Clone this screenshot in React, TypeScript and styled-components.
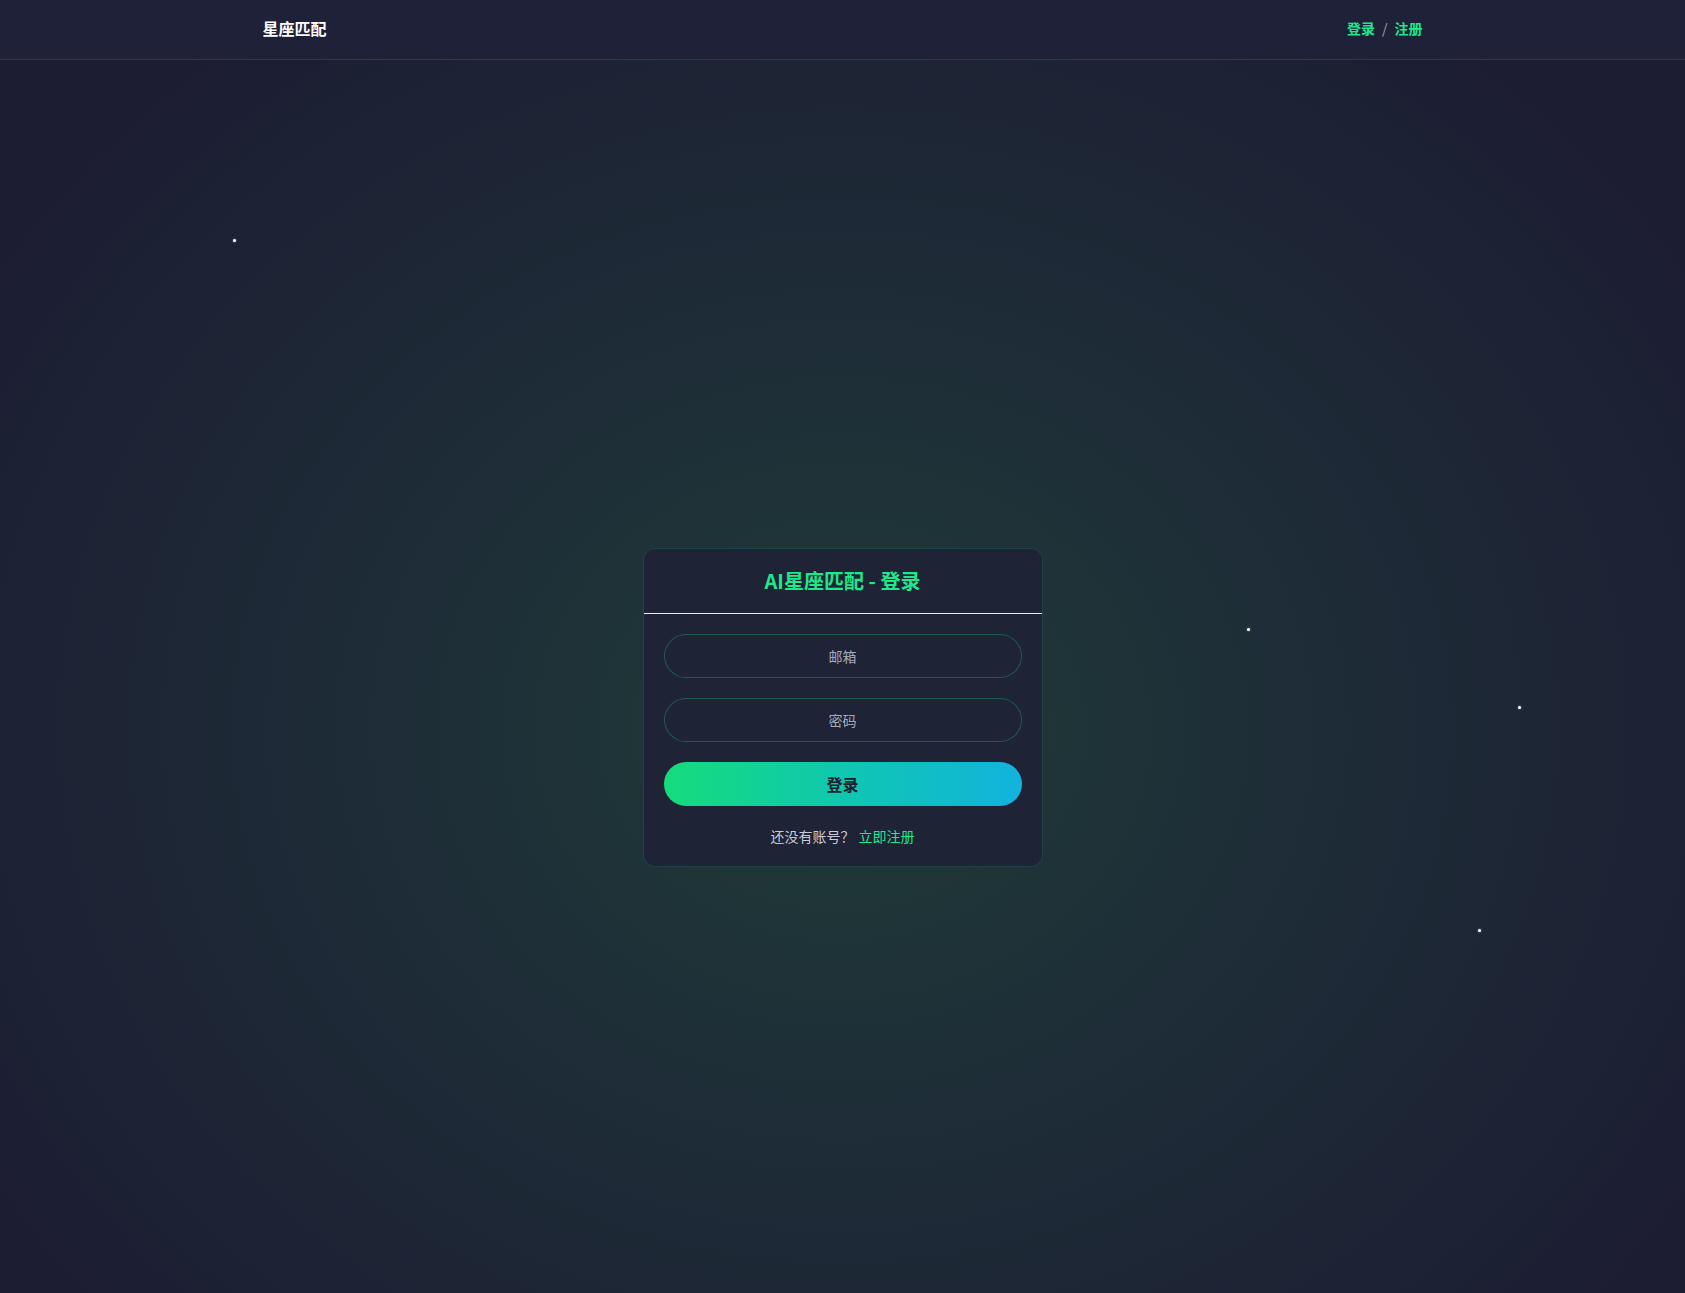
import React from "react";
import styled, { createGlobalStyle } from "styled-components";

const GlobalStyle = createGlobalStyle`
  html, body {
    margin: 0;
    padding: 0;
    overflow: hidden;
  }
  body {
    font-family: "Noto Sans CJK SC", "Noto Sans", sans-serif;
    background: #1c1d33;
    color: #e6e8ef;
  }
  * { box-sizing: border-box; }
`;

const Page = styled.div`
  position: relative;
  min-height: 100vh;
  background: radial-gradient(ellipse 60% 65% at 50% 54%, #1f3b38 0%, #1e2d37 45%, #1c1d33 100%);
`;

const Header = styled.header`
  height: 60px;
  background: rgba(31, 34, 56, 0.92);
  border-bottom: 1px solid rgba(30, 230, 140, 0.18);
`;

const HeaderInner = styled.div`
  max-width: 1200px;
  height: 100%;
  margin: 0 auto;
  padding: 0 20px 3px;
  display: flex;
  align-items: center;
  justify-content: space-between;
`;

const Logo = styled.div`
  font-size: 16px;
  font-weight: 700;
  color: #ffffff;
`;

const Nav = styled.nav`
  display: flex;
  align-items: center;
  font-size: 14px;
  font-weight: 700;
`;

const NavLink = styled.a`
  color: #1ee88c;
  text-decoration: none;
`;

const NavSep = styled.span`
  color: #9a9fb0;
  font-weight: 400;
  margin: 0 7px;
`;

const Main = styled.main`
  min-height: 100vh;
  padding-top: 2px;
  display: flex;
  align-items: center;
  justify-content: center;
`;

const Card = styled.div`
  width: 400px;
  background: #1f2336;
  border: 1px solid rgba(30, 230, 140, 0.16);
  border-radius: 12px;
  overflow: hidden;
`;

const CardHeader = styled.div`
  padding: 20px 20px 20px;
  border-bottom: 1px solid rgba(255, 255, 255, 0.92);
  text-align: center;
`;

const Title = styled.h2`
  margin: 0;
  font-size: 20px;
  line-height: 24px;
  font-weight: 700;
  color: #1ee88c;
`;

const Form = styled.form`
  display: flex;
  flex-direction: column;
  gap: 20px;
  padding: 20px;
`;

const Input = styled.input`
  height: 44px;
  width: 100%;
  border-radius: 22px;
  border: 1px solid rgba(30, 230, 140, 0.28);
  background: #1f2336;
  color: #e6e8ef;
  font-family: inherit;
  font-size: 14px;
  text-align: center;
  padding-bottom: 2px;
  outline: none;
  &::placeholder {
    color: #a6a9b6;
  }
`;

const Button = styled.button`
  height: 44px;
  width: 100%;
  border: none;
  border-radius: 22px;
  background: linear-gradient(90deg, #16dc7c 0%, #0fc7b0 50%, #12b3de 100%);
  color: #1a1f2e;
  font-family: inherit;
  font-size: 16px;
  font-weight: 700;
  padding-bottom: 2px;
  cursor: pointer;
`;

const Footer = styled.div`
  text-align: center;
  font-size: 14px;
  line-height: 20px;
  color: #c9ccd6;
`;

const FooterLink = styled.a`
  color: #1ee88c;
  text-decoration: none;
  margin-left: 4px;
`;

const Star = styled.span`
  position: absolute;
  width: 3px;
  height: 3px;
  border-radius: 50%;
  background: #ffffff;
  box-shadow: 0 0 2px rgba(255, 255, 255, 0.6);
`;

const stars = [
  { x: 233, y: 239 },
  { x: 1247, y: 628 },
  { x: 1518, y: 706 },
  { x: 1478, y: 929 },
];

export default function App() {
  return (
    <>
      <GlobalStyle />
      <Page>
        {stars.map((s, i) => (
          <Star key={i} style={{ left: s.x, top: s.y }} />
        ))}
        <Header>
          <HeaderInner>
            <Logo>星座匹配</Logo>
            <Nav>
              <NavLink href="#">登录</NavLink>
              <NavSep>/</NavSep>
              <NavLink href="#">注册</NavLink>
            </Nav>
          </HeaderInner>
        </Header>
        <Main>
          <Card>
            <CardHeader>
              <Title>AI星座匹配 - 登录</Title>
            </CardHeader>
            <Form onSubmit={(e) => e.preventDefault()}>
              <Input type="email" placeholder="邮箱" />
              <Input type="password" placeholder="密码" />
              <Button type="submit">登录</Button>
              <Footer>
                还没有账号？<FooterLink href="#">立即注册</FooterLink>
              </Footer>
            </Form>
          </Card>
        </Main>
      </Page>
    </>
  );
}
